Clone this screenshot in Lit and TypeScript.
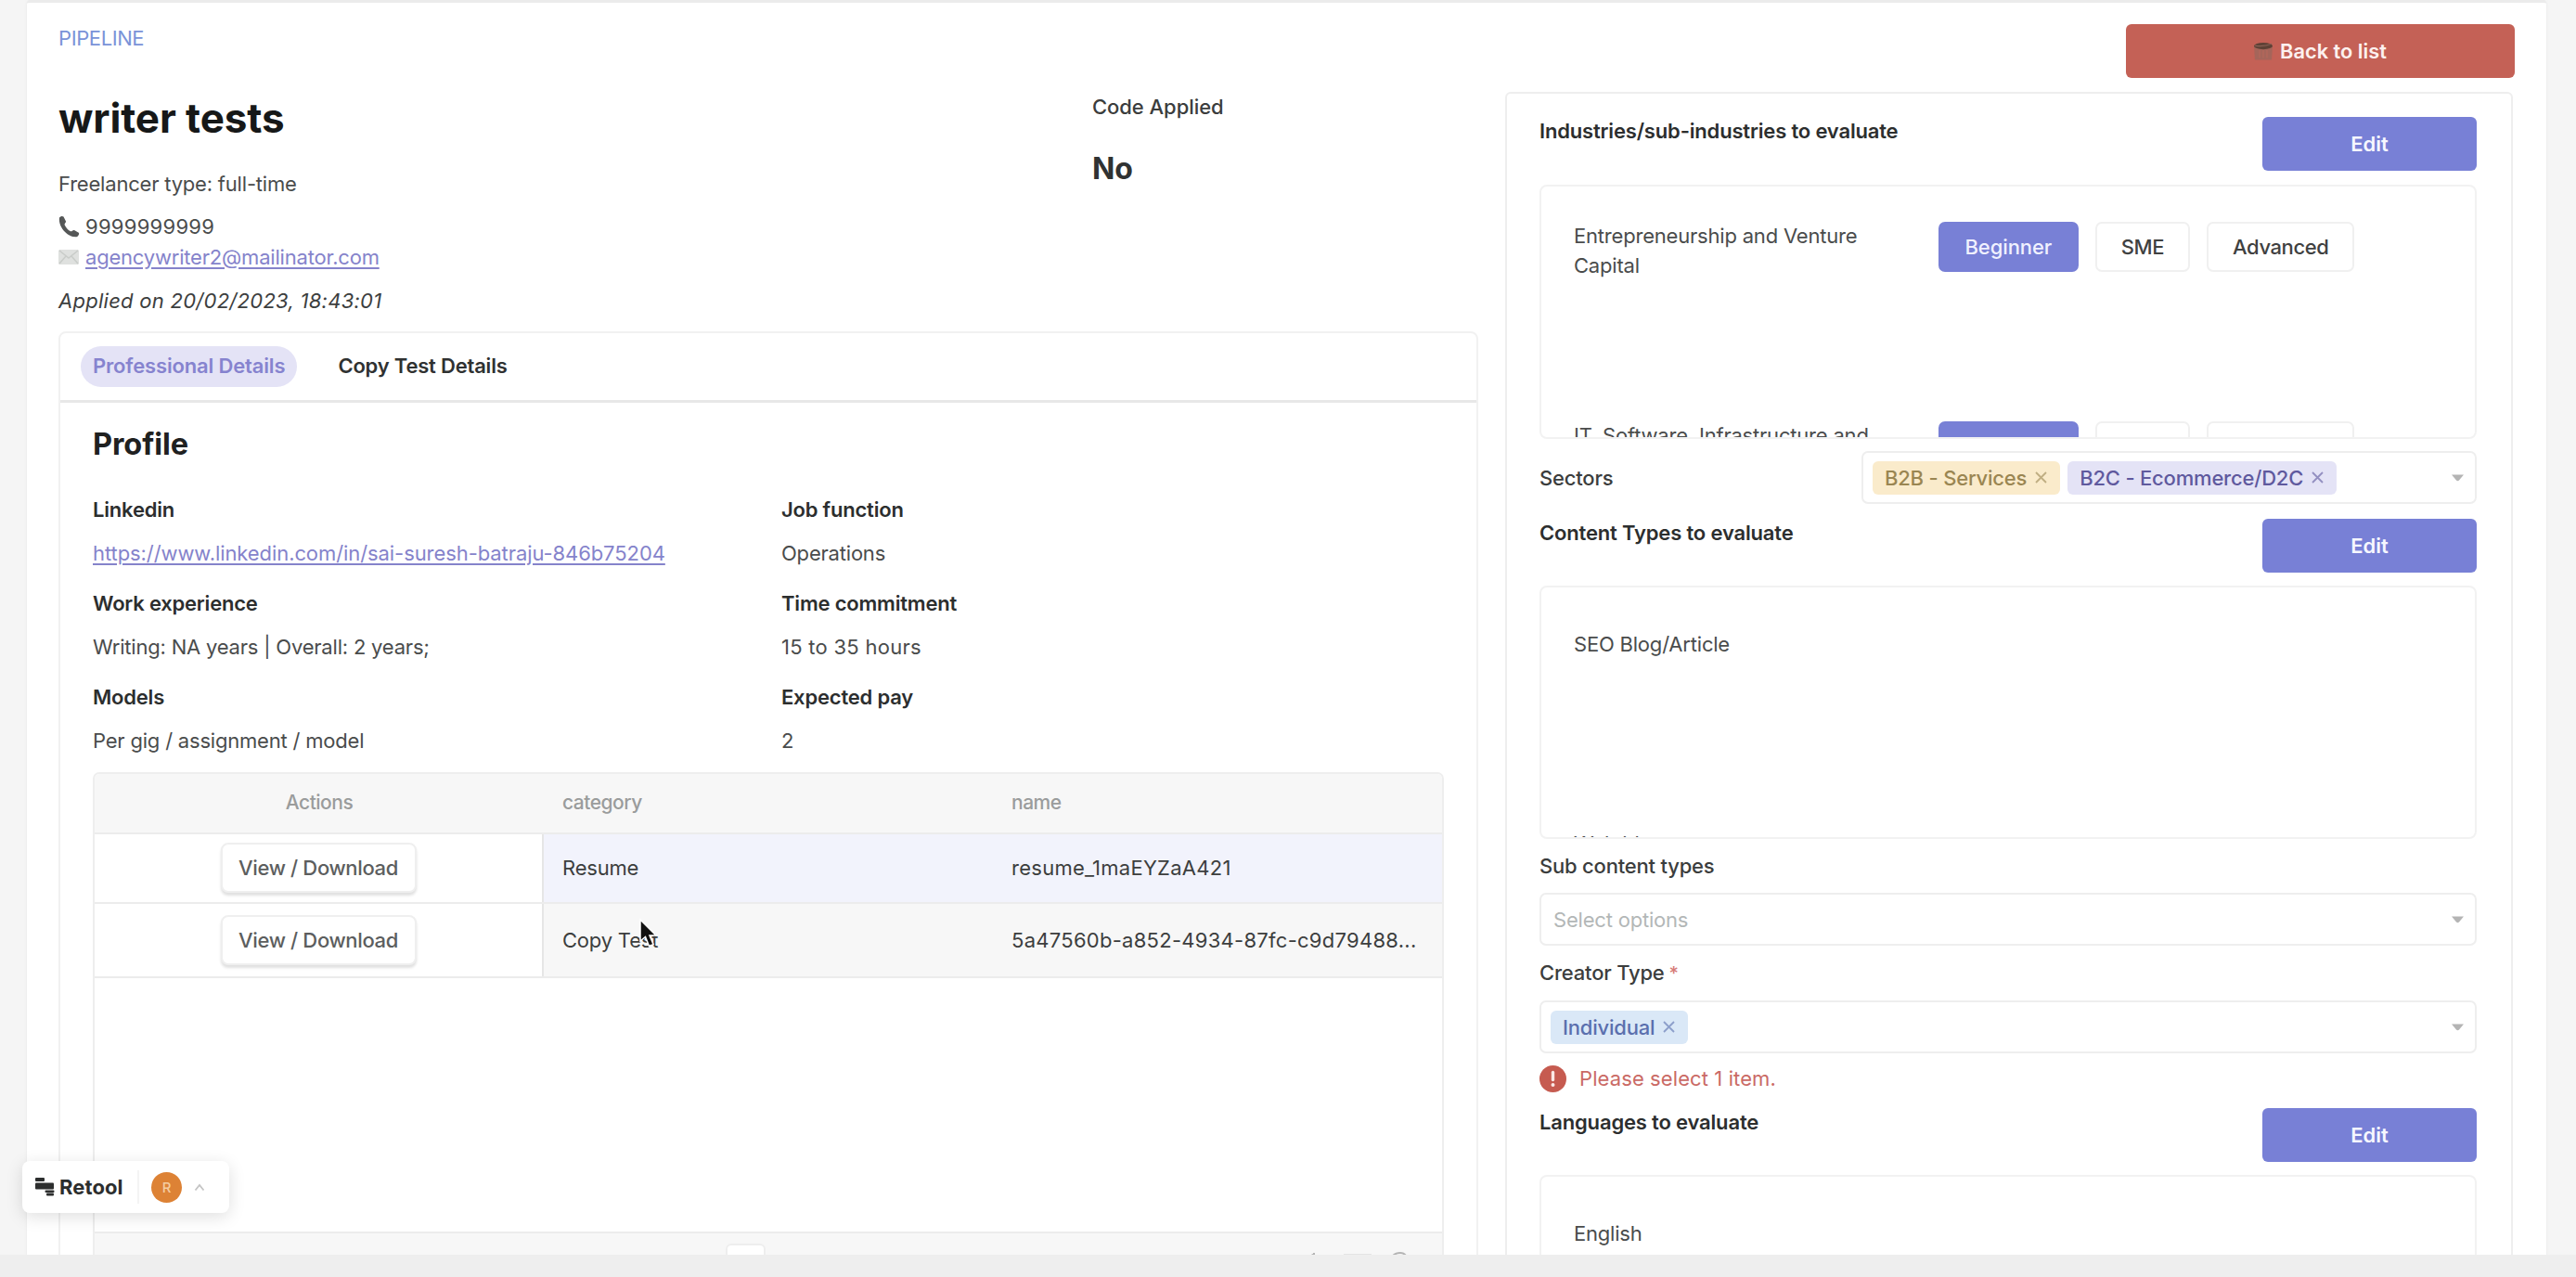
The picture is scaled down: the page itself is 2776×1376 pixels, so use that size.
import { LitElement, html, css, nothing } from "lit";
import { customElement, property } from "lit/decorators.js";
import { classMap } from "lit/directives/class-map.js";

const shared = css`
  * { box-sizing: border-box; }
  .line { line-height: 30px; white-space: nowrap; }
  .strong { font-weight: 600; color: #2c2e2e; }
  .medium { font-weight: 500; color: #3b3d3d; }
  .num { letter-spacing: .27px; }
`;

const closeIcon = html`<svg width="15" height="15" viewBox="0 0 15 15" fill="none" stroke="currentColor" stroke-width="1.8" opacity=".6"><path d="M2 2l11 11M13 2L2 13"/></svg>`;

@customElement("action-button")
class ActionButton extends LitElement {
  static styles = css`
    :host { display: block; }
    .btn { height: 58px; border-radius: 6px; display: flex; align-items: center; justify-content: center; gap: 7px;
      background: #7880d6; color: #f6f7ff; font-weight: 600; font-size: 22px; line-height: 58px; }
    .btn.danger { background: #c46156; color: #fdf1ef; font-size: 21.8px; padding-right: 1px; }
  `;
  @property({ type: Boolean }) danger = false;
  render() {
    return html`<div class=${classMap({ btn: true, danger: this.danger })}><slot></slot></div>`;
  }
}

@customElement("select-box")
class SelectBox extends LitElement {
  static styles = [shared, css`
    :host { display: block; }
    .box { height: 57px; border: 2px solid #eeeeee; border-radius: 7px; display: flex; align-items: center; gap: 8px; padding: 0 11px 0 10px; background: #fff; }
    .ph { color: #b3b7b7; padding-left: 3px; }
    .chip { height: 36px; border-radius: 6px; padding: 0 13px; display: flex; align-items: center; gap: 8px; line-height: 36px; font-weight: 500; white-space: nowrap; }
    .amber { background: #faebcb; color: #9a8652; }
    .violet { background: #e4e3f6; color: #5f599e; }
    .blue { background: #dae8f7; color: #5a6fae; }
    .caret { margin-left: auto; color: #b4b4b4; }
    svg { display: block; }
  `];
  @property({ attribute: false }) chips: [string, string][] = [];
  @property() placeholder = "";
  render() {
    return html`<div class="box">
      ${this.placeholder ? html`<span class="ph">${this.placeholder}</span>` : nothing}
      ${this.chips.map(([t, c]) => html`<span class="chip ${c}">${t}${closeIcon}</span>`)}
      <svg class="caret" width="15" height="10" viewBox="0 0 15 10"><path fill="currentColor" d="M1 1.5h13L9 7.6q-1.500 1.400-3 0z"/></svg>
    </div>`;
  }
}

@customElement("app-root")
class AppRoot extends LitElement {
  static styles = [shared, css`
    :host { display: block; position: relative; width: 2776px; height: 1376px; overflow: hidden; background: #eeeeee;
      font-family: Inter, "Liberation Sans", sans-serif; font-size: 22px; letter-spacing: -.2px; color: #4a4c4c; }
    svg { display: block; flex: none; }
    .main { height: 1352px; overflow: hidden; background: #f5f5f5; padding: 0 32px 0 29px; }
    .page { height: 1400px; background: #fff; border-top: 3px solid #ebebeb; border-radius: 4px; display: grid;
      grid-template-columns: 1530px 1088px; column-gap: 29px; padding-left: 34px; box-shadow: 0 0 3px #e6e6e6; }
    .head { display: grid; grid-template-columns: 1114px 1fr; height: 354px; }
    .crumb { margin-top: 23px; color: #7a93d8; letter-spacing: -.4px; }
    h1 { margin: 46px 0 0; font-size: 44px; line-height: 50px; font-weight: 700; color: #161818; letter-spacing: -.1px; white-space: nowrap; }
    .type { margin-top: 31px; }
    .phone { margin-top: 16px; display: flex; align-items: center; gap: 6px; }
    .mail { margin-top: 3px; display: flex; align-items: center; gap: 7px; }
    .link { color: #8583cb; text-decoration: underline; text-decoration-thickness: 2px; text-underline-offset: 3px; }
    .url { letter-spacing: -.08px; }
    .applied { margin-top: 17px; font-style: italic; color: #3c3e3e; letter-spacing: .27px; }
    .codelabel { margin-top: 97px; letter-spacing: -.05px; }
    .code { margin-top: 32px; font-size: 32px; line-height: 40px; font-weight: 700; color: #303232; }

    .card { height: 1100px; border: 2px solid #f1f1f1; border-radius: 8px; }
    .tabs { height: 75px; border-bottom: 3px solid #e8e8e8; padding: 14px 22px; display: flex; gap: 44px; }
    .tab { height: 44px; line-height: 42px; font-weight: 600; color: #2f3131; white-space: nowrap; }
    .tab.on { border-radius: 22px; background: #e4e3f6; color: #8683cf; padding: 0 13px; letter-spacing: -.16px; }
    .body { padding: 25px 35px 0; }
    h2 { margin: 0; font-size: 32.5px; line-height: 40px; font-weight: 700; color: #1f2121; letter-spacing: -.1px; }
    .fields { margin-top: 35px; display: grid; grid-template-columns: 742px 1fr; row-gap: 24.5px; }
    .value { margin-top: 16.5px; }

    .table { margin-top: 19px; width: 1456px; height: 600px; border: 2px solid #eeeeee; border-radius: 7px 7px 0 0; overflow: hidden; display: flex; flex-direction: column; }
    .row { flex: none; display: grid; grid-template-columns: 484px 484px 1fr; align-items: stretch; border-bottom: 2px solid #ececec; height: 75px; }
    .row.tall { height: 80px; }
    .row.hd { height: 65px; background: #f7f7f7; color: #9a9c9c; font-weight: 500; font-size: 21px; letter-spacing: -.5px; }
    .row.hd .cell { border: 0; background: none; color: inherit; padding-bottom: 2px; }
    .cell { display: flex; align-items: center; padding-left: 20px; white-space: nowrap; color: #3c3e3e; }
    .cell.act { justify-content: center; padding-left: 0; border-right: 2px solid #e6e6e6; background: #fff; }
    .sel { background: #f2f3fc; }
    .alt { background: #f7f7f7; }
    .view { width: 211px; height: 54px; border: 2px solid #efefef; border-radius: 8px; background: #fff; box-shadow: 0 3px 3px #e0e0e0; color: #5c5e5e;
      font-weight: 500; line-height: 50px; text-align: center; letter-spacing: -.35px; }
    .fill { flex: none; height: 273px; }
    .foot { flex: none; height: 200px; background: #f7f7f7; border-top: 2px solid #ececec; display: flex; justify-content: space-between; padding: 11px 32px 0 680px; }
    .pageno { width: 43px; height: 40px; border: 2px solid #eeeeee; border-radius: 6px; background: #fff; }
    .filetools { margin-top: -3px; }

    .right { display: flex; flex-direction: column; }
    .back { width: 419px; margin: 23px 0 0 auto; letter-spacing: 0; }
    .panel { margin-top: 15px; height: 1400px; width: 1086px; border: 2px solid #eeeeee; border-radius: 6px 6px 0 0; padding: 0 37px 0 35px; }
    .title { display: flex; justify-content: space-between; align-items: flex-start; margin-top: 16px; letter-spacing: -.17px; }
    .title.first { margin-top: 25px; }
    .title.last { margin-top: 17px; }
    .edit { width: 231px; letter-spacing: 0; }
    .list { height: 273px; border: 2px solid #f2f2f2; border-radius: 8px; overflow: hidden; padding: 46px 35px 0; margin-top: 14px; }
    .list.graded { height: 274px; margin-top: 15px; padding-top: 38px; }
    .item { height: 215px; display: grid; grid-template-columns: 393px 1fr; line-height: 31.5px; }
    .item .name { white-space: pre; }
    .levels { display: flex; gap: 18px; }
    .level { height: 54px; border-radius: 7px; border: 2px solid #f0f0f0; padding: 0 26px; line-height: 50px; font-weight: 500; color: #3f4141; letter-spacing: -.4px; }
    .level.on { background: #7880d6; border-color: #7880d6; color: #f0f1ff; padding: 0 26.5px; letter-spacing: -.1px; }
    .sectors { display: flex; align-items: center; justify-content: space-between; margin-top: 13px; }
    .sectorpick { width: 663px; }
    .lbl { margin-top: 14px; }
    .pick { margin-top: 14px; }
    .star { color: #d77b78; font-size: 20px; margin-left: 5px; }
    .error { display: flex; align-items: center; gap: 14px; color: #ca6a65; margin-top: 12px; letter-spacing: .1px; }

    .retool { position: absolute; left: 24px; top: 1251px; width: 223px; height: 56px; border-radius: 8px; background: #fff; box-shadow: 0 4px 18px rgba(0,0,0,.13);
      display: flex; align-items: center; padding-left: 14px; }
    .brand { margin-left: 5px; font-weight: 700; font-size: 22px; color: #2c2e2e; width: 84px; letter-spacing: .1px; }
    .sep { width: 2px; height: 36px; background: #f4f4f4; margin-right: 13px; }
    .avatar { width: 33px; height: 33px; border-radius: 50%; background: #dd8235; color: #f5cda2; font-size: 15px; line-height: 33px; text-align: center; font-weight: 500; }
    .chev { margin-left: 13px; }
    .cursor { position: absolute; left: 687px; top: 989px; }
  `];

  private levels() {
    return html`<div class="levels"><div class="level on">Beginner</div><div class="level">SME</div><div class="level">Advanced</div></div>`;
  }

  private field(label: string, value: unknown) {
    return html`<div><div class="line strong">${label}</div><div class="line value">${value}</div></div>`;
  }

  private fileRow(category: string, name: string, tone: string, tall = false) {
    return html`<div class=${classMap({ row: true, tall })}>
      <div class="cell act"><div class="view">View / Download</div></div>
      <div class="cell ${tone}">${category}</div><div class="cell num ${tone}">${name}</div>
    </div>`;
  }

  render() {
    return html`
      <div class="main"><div class="page">
        <div class="left">
          <div class="head">
            <div>
              <div class="line crumb">PIPELINE</div>
              <h1>writer tests</h1>
              <div class="line type">Freelancer type: full-time</div>
              <div class="line phone">
                <svg width="23" height="24" viewBox="0 0 23 24"><path fill="#555757" d="M1 2.500C2 .8 4.500.5 5.500 1.500L8 6.500c.5 1-1.500 2.500-1.500 3.500C8 13.500 10 15.500 13 17.300c1.500.2 2.500-1.800 4-1.300l4.800 2.700c1 1-.3 4-2.300 4.600C10.500 24-.5 13 1 2.500z"/></svg>
                <span class="num">9999999999</span>
              </div>
              <div class="line mail">
                <svg width="22" height="16" viewBox="0 0 22 16"><rect width="22" height="16" rx="1.500" fill="#dfe1df"/><path d="M1 1l10 8L21 1M1 15l7-8M21 15l-7-8" fill="none" stroke="#c9ccc9" stroke-width="1.500"/></svg>
                <span class="link">agencywriter2@mailinator.com</span>
              </div>
              <div class="line applied">Applied on 20/02/2023, 18:43:01</div>
            </div>
            <div>
              <div class="line medium codelabel">Code Applied</div>
              <div class="code">No</div>
            </div>
          </div>
          <div class="card">
            <div class="tabs"><div class="tab on">Professional Details</div><div class="tab">Copy Test Details</div></div>
            <div class="body">
              <h2>Profile</h2>
              <div class="fields">
                ${this.field("Linkedin", html`<span class="link url">https://www.linkedin.com/in/sai-suresh-batraju-846b75204</span>`)}
                ${this.field("Job function", "Operations")}
                ${this.field("Work experience", "Writing: NA years | Overall: 2 years;")}
                ${this.field("Time commitment", html`<span class="num">15 to 35 hours</span>`)}
                ${this.field("Models", "Per gig / assignment / model")}
                ${this.field("Expected pay", "2")}
              </div>
              <div class="table">
                <div class="row hd"><div class="cell act">Actions</div><div class="cell">category</div><div class="cell">name</div></div>
                ${this.fileRow("Resume", "resume_1maEYZaA421", "sel")}
                ${this.fileRow("Copy Test", "5a47560b-a852-4934-87fc-c9d79488...", "alt", true)}
                <div class="fill"></div>
                <div class="foot">
                  <div class="pageno"></div>
                  <svg class="filetools" width="112" height="24" viewBox="0 0 112 24" fill="none" stroke="#b4b4b4" stroke-width="2"><path d="M6 13v9M2 17l4-3"/><path stroke="#e4e4e4" d="M38 15h30"/><path d="M91 16q3-3 8-3 4 0 6 3l5 1"/></svg>
                </div>
              </div>
            </div>
          </div>
        </div>
        <div class="right">
          <action-button class="back" danger>
            <svg width="22" height="20" viewBox="0 0 22 22" preserveAspectRatio="none"><path fill="#a5655a" d="M1 5h20l-1 16.500H2z"/><path stroke="#b3675b" stroke-width="1.500" d="M7 10v9M11 10v9M15 10v9"/><ellipse cx="11" cy="5" rx="10" ry="4" fill="#5d4135"/><path d="M2 4.500q9 2 18-2" stroke="#8a6054" stroke-width="1.300" fill="none"/></svg>
            Back to list
          </action-button>
          <div class="panel">
            <div class="title first"><div class="line strong">Industries/sub-industries to evaluate</div><action-button class="edit">Edit</action-button></div>
            <div class="list graded">
              <div class="item"><div class="name">Entrepreneurship and Venture
Capital</div>${this.levels()}</div>
              <div class="item"><div class="name">IT, Software, Infrastructure and</div>${this.levels()}</div>
            </div>
            <div class="sectors"><div class="line medium">Sectors</div>
              <select-box class="sectorpick" .chips=${[["B2B - Services", "amber"], ["B2C - Ecommerce/D2C", "violet"]]}></select-box></div>
            <div class="title"><div class="line strong">Content Types to evaluate</div><action-button class="edit">Edit</action-button></div>
            <div class="list">
              <div class="item"><div class="name">SEO Blog/Article</div></div>
              <div class="item"><div class="name">Web blogs</div></div>
            </div>
            <div class="line medium lbl">Sub content types</div>
            <select-box class="pick" placeholder="Select options"></select-box>
            <div class="line medium lbl">Creator Type<span class="star">*</span></div>
            <select-box class="pick" .chips=${[["Individual", "blue"]]}></select-box>
            <div class="line error">
              <svg width="29" height="29" viewBox="0 0 29 29"><circle cx="14.500" cy="14.500" r="14.500" fill="#c65b50"/><path stroke="#fbe9e6" stroke-width="3.400" stroke-linecap="round" d="M14.500 7.500v8"/><circle cx="14.500" cy="21" r="2" fill="#fbe9e6"/></svg>
              <span>Please select 1 item.</span>
            </div>
            <div class="title last"><div class="line strong">Languages to evaluate</div><action-button class="edit">Edit</action-button></div>
            <div class="list"><div class="item"><div class="name">English</div></div></div>
          </div>
        </div>
      </div></div>
      <div class="retool">
        <svg width="21" height="20" viewBox="0 0 21 20" fill="#2c2e2e"><rect x="0" y="0" width="10" height="4" rx="1"/><rect x="0" y="5.500" width="20" height="7" rx="1"/><rect x="10.500" y="13.500" width="10" height="2.500" rx="1"/><rect x="12" y="16.500" width="8" height="3" rx="1"/></svg>
        <span class="brand">Retool</span><span class="sep"></span><span class="avatar">R</span>
        <svg class="chev" width="12" height="9" viewBox="0 0 12 9" fill="none" stroke="#c4c4c4" stroke-width="1.800"><path d="M1.500 7.500L6 2l4.500 5.500"/></svg>
      </div>
      <svg class="cursor" width="24" height="36" viewBox="0 0 24 36"><path fill="#111" stroke="#fff" stroke-width="1.500" d="M3 2v23l5.500-4.500 4 10 4.500-2-4-9.500h7z"/></svg>
    `;
  }
}
